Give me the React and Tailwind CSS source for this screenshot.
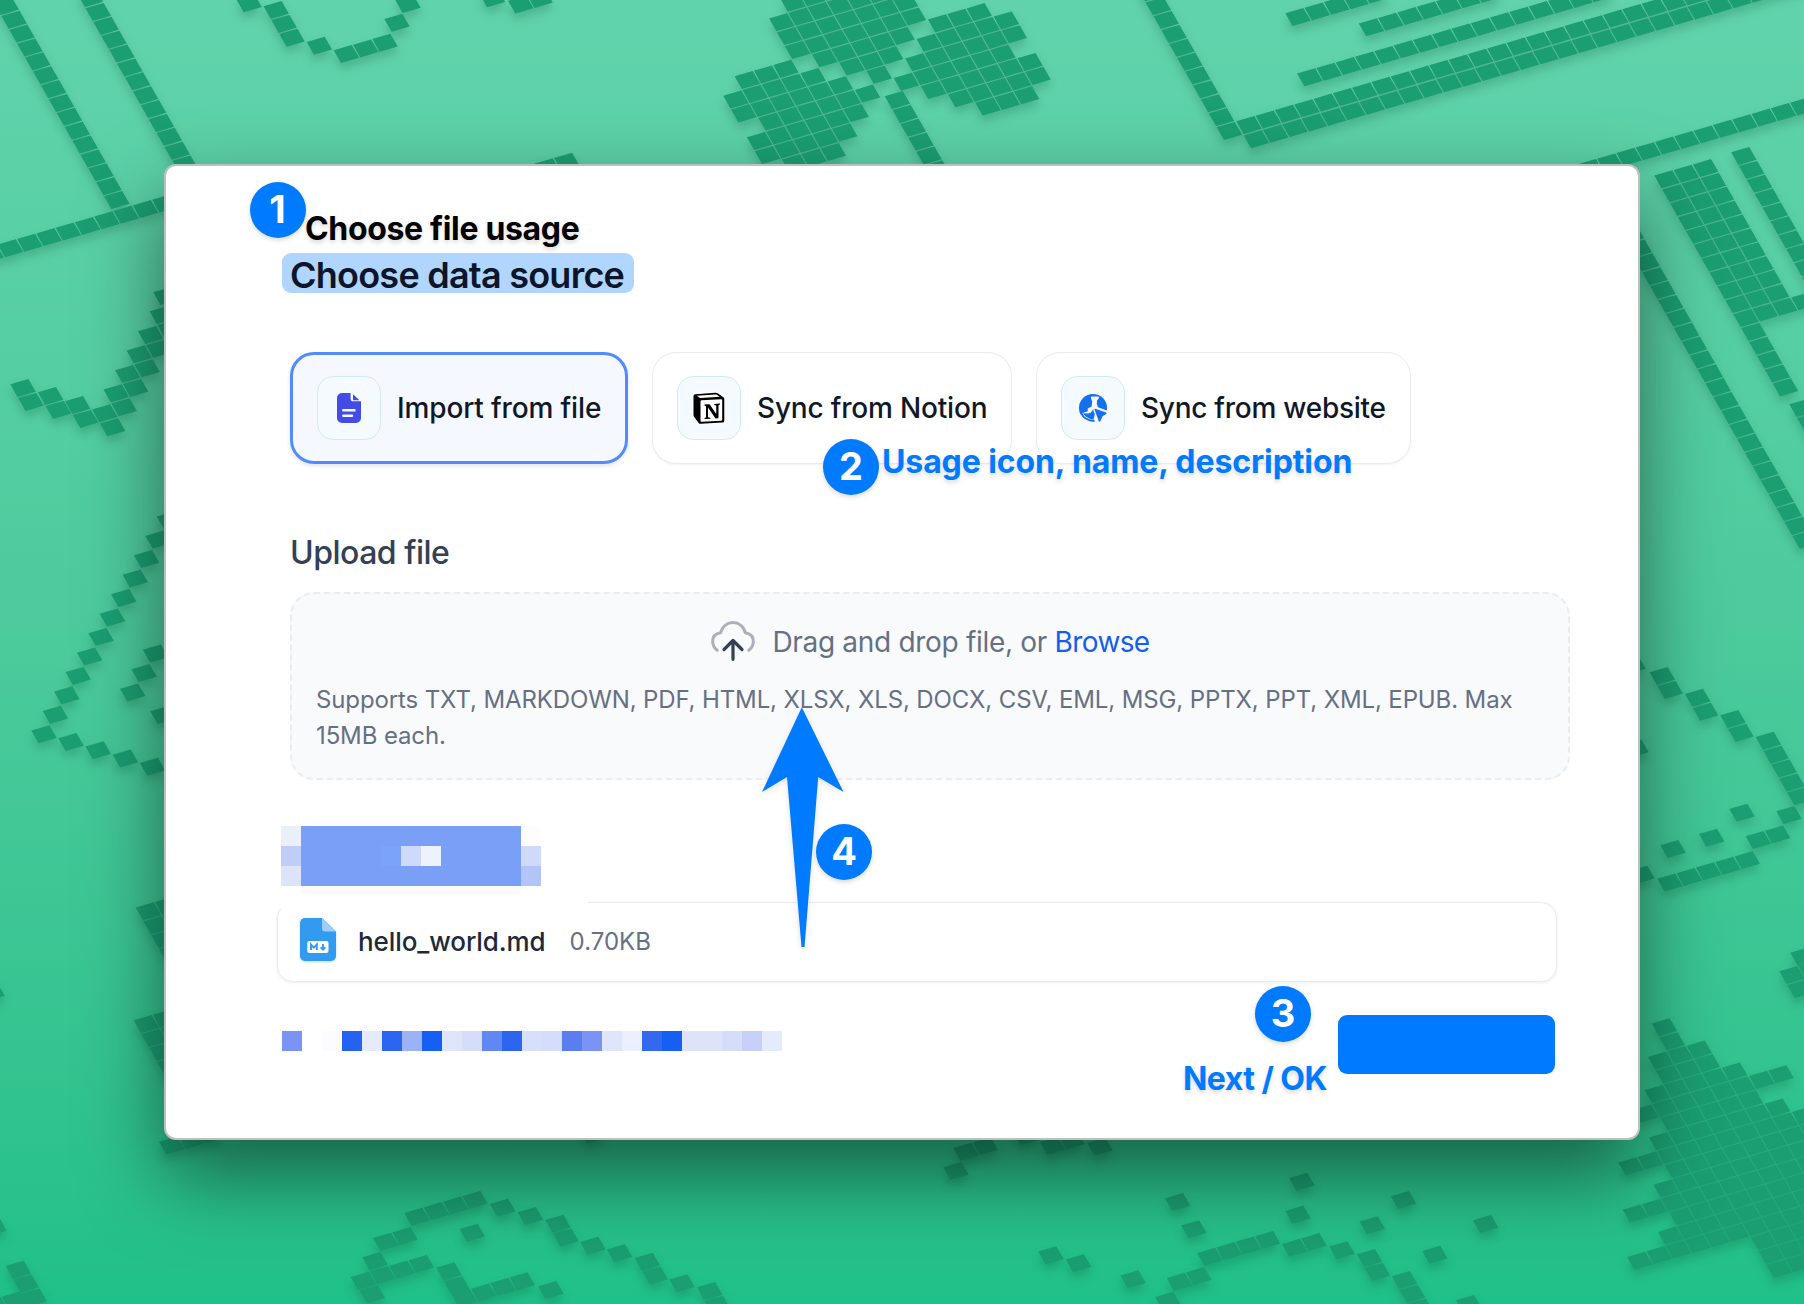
import React from "react";

const U = [19.3, -5.6];
const V = [7.9, 13.87];

// [x, y, columns, rows] of a block; x and y are the centre of its first tile
const BLOCKS = [
  [-1.7, -8, 1, 16], [90.3, -1.9, 1, 13], [-8.9, 253.9, 10, 1],
  [249.1, 3.3, 1, 1], [276.2, 10, 1, 3], [319.3, 45.7, 1, 1], [346.4, 54, 3, 1], [397, 22.7, 1, 1], [408, 4, 1, 1],
  [492.5, -1.7, 1, 1], [520.7, 4.5, 2, 1], [547.4, 167.3, 2, 1],
  [897.4, 100, 1, 6],
  [1150.4, -7.7, 1, 11], [1249, 125, 26, 1], [1256.4, 139.3, 29, 1],
  [1309.8, 77.3, 16, 1], [1371.5, 27.3, 7, 1], [1298, 17, 5, 1],
  [1590.5, 168, 13, 1], [1667, 179.3, 3, 10], [1746, 318, 5, 1], [1746, 318, 1, 6], [1623.4, 220.7, 1, 24],
  [1743.8, 156, 1, 10], [1802, 408, 1, 4],
  [23, 388, 1, 2], [50.6, 396, 1, 2], [77.7, 405, 1, 2], [104.7, 413.3, 1, 2], [116.2, 393.3, 1, 2], [127.7, 374, 1, 2],
  [139.2, 354.3, 1, 2], [150.7, 335, 1, 2], [162.3, 315, 1, 2], [166, 296, 1, 1],
  [163, 715, 1, 1], [148.3, 911.3, 2, 5], [146.3, 1024, 2, 5], [171.7, 1145.5, 3, 1],
  [-6, 1227, 1, 1], [-8, 992, 1, 1], [18.3, 1269.7, 1, 3], [-5, 1306, 2, 1],
  [1633, 665, 1, 1], [1662.3, 676, 1, 2], [1697.7, 697.8, 1, 2], [1733, 719, 1, 2], [1768.3, 740.8, 1, 5], [1636, 748.5, 1, 1],
  [1789, 815, 1, 1], [1742, 812.7, 1, 1], [1711.7, 837.8, 1, 1], [1673, 849, 1, 1], [1758.3, 840, 2, 1], [1642, 874.8, 1, 1],
  [1670, 882.5, 5, 1], [1803, 956.5, 1, 1], [1792, 975, 2, 1], [1800, 989, 1, 1],
  [592, 1134, 1, 1], [966, 1151.7, 2, 1], [956, 1171, 1, 1], [1026, 1136, 1, 1], [1052.7, 1146, 2, 1], [1100, 1146.7, 1, 1],
  [417, 1216.7, 4, 1], [385.7, 1241.7, 2, 1], [472.3, 1232.7, 1, 1], [502.7, 1207.7, 1, 1], [530.4, 1216, 1, 1],
  [558, 1223.7, 1, 2], [592.9, 1245.7, 1, 1], [619.6, 1253.3, 1, 1], [647.3, 1261.7, 1, 2], [682, 1283.3, 1, 1], [709.8, 1291, 1, 2],
  [375, 1261, 1, 1], [363.4, 1280.7, 4, 1], [372.3, 1294.3, 1, 1], [449, 1271.3, 1, 2], [464.3, 1298, 4, 1], [550.9, 1290, 1, 1],
  [1177.7, 1202, 1, 1], [1301.8, 1181.7, 1, 1], [1403.6, 1200, 1, 1], [1193.8, 1229.3, 1, 1], [1298, 1214.7, 1, 1],
  [1372.3, 1225.3, 1, 1], [1485.7, 1224, 1, 1], [1050.9, 1255.3, 1, 1], [1078.6, 1263.3, 1, 1], [1133, 1279.3, 1, 1],
  [1209.8, 1256.7, 4, 1], [1294.6, 1247.7, 2, 1], [1342, 1250.3, 1, 1], [1369.6, 1258, 1, 2], [1434.8, 1254.7, 1, 1],
  [1404.5, 1280, 1, 3], [1179.5, 1281.7, 2, 1], [1167.9, 1300.7, 1, 1], [1468.8, 1304, 1, 1],
];

// clusters: origin plus [row, firstColumn, lastColumn]
const CLUSTERS = [
  { at: [747.3, 80], rows: [[0, 0, 2], [1, -1, 3], [2, -1, 4], [3, 0, 5], [4, -1, 4], [5, -1, 3], [6, 0, 2]] },
  { at: [797.6, 50], rows: [[-4, 2, 6], [-3, 1, 6], [-2, 0, 6], [-1, 0, 6], [0, 0, 6], [1, 1, 5], [2, 2, 4], [3, 3, 3]] },
  { at: [940.6, 23.3], rows: [[0, 0, 2], [1, -1, 3], [2, -2, 3], [3, -3, 2], [4, -2, 3], [5, -1, 3], [6, 0, 2]] },
  {
    at: [1664.3, 1027.3],
    rows: [
      [0, 0, 0], [1, 0, 0], [2, -1, 1], [3, -1, 1], [4, -2, 2], [5, -3, 4], [6, -2, 2], [7, -3, 3], [8, -5, 4], [9, -3, 4],
      [10, -4, 4], [11, -6, 4], [12, -4, 4], [13, -5, 4], [14, -7, 3], [15, -1, 3], [16, -1, 2], [17, -1, 2],
    ],
  },
];

// slanted runs: [x, y, du, dv, count]
const DIAGONALS = [
  [44, 734.3, 1, -1, 12],
  [71, 742, 1, 1, 5],
  [132.7, 692.4, 1, -1, 3],
];

function tile(x, y) {
  const a = 0.47;
  const b = 0.46;
  const p = (s, t) => `${(x + s * a * U[0] + t * b * V[0]).toFixed(1)} ${(y + s * a * U[1] + t * b * V[1]).toFixed(1)}`;
  return `M${p(-1, -1)}L${p(1, -1)}L${p(1, 1)}L${p(-1, 1)}Z`;
}

function wallpaperPath() {
  const out = [];
  const put = (x, y, i, j) => out.push(tile(x + i * U[0] + j * V[0], y + i * U[1] + j * V[1]));
  BLOCKS.forEach(([x, y, c, r]) => {
    for (let i = 0; i < c; i++) for (let j = 0; j < r; j++) put(x, y, i, j);
  });
  CLUSTERS.forEach(({ at, rows }) =>
    rows.forEach(([j, from, to]) => {
      for (let i = from; i <= to; i++) put(at[0], at[1], i, j);
    })
  );
  DIAGONALS.forEach(([x, y, du, dv, n]) => {
    for (let k = 0; k < n; k++) put(x, y, du * k, dv * k);
  });
  return out.join("");
}

function Wallpaper() {
  return (
    <svg className="absolute inset-0 h-full w-full" viewBox="0 0 1804 1304" aria-hidden="true">
      <path d={wallpaperPath()} fill="#1b9e72" className="drop-shadow-[0_6px_5px_rgba(0,70,40,0.22)]" />
    </svg>
  );
}

function Badge({ n, className }) {
  return (
    <span
      className={`absolute flex h-14 w-14 items-center justify-center rounded-full bg-[#007aff] pb-0.5 text-[38px] leading-none font-bold text-white shadow-[0_2px_5px_rgba(0,0,0,0.16)] ${className}`}
    >
      {n}
    </span>
  );
}

function Note({ children, className }) {
  return (
    <span className={`absolute text-[32px] leading-10 font-bold whitespace-nowrap [text-shadow:0_3px_4px_rgba(0,0,0,0.14)] ${className}`}>
      {children}
    </span>
  );
}

const FileIcon = () => (
  <svg viewBox="0 0 24 30" className="h-[30px] w-6" fill="#444ce7">
    <path
      fillRule="evenodd"
      d="M5 0h8.6v5.4c0 2 .9 2.900 2.900 2.900H24V25a5 5 0 0 1-5 5H5a5 5 0 0 1-5-5V5a5 5 0 0 1 5-5ZM6.300 16a1.200 1.200 0 0 0 0 2.500h11.200a1.200 1.200 0 0 0 0-2.500H6.300Zm0 5.500a1.200 1.200 0 0 0 0 2.500h8.700a1.200 1.200 0 0 0 0-2.500H6.300Z"
    />
    <path d="M16 1.200v5.200c0 .5.300.9.900.9h5.500Z" />
  </svg>
);

const NotionIcon = () => (
  <svg viewBox="0 0 32 32" className="h-8 w-8">
    <path d="M1.500 2.200 22.500.5 31.500 6.500V28.500L30 31.200 8 32 1 24Z" fill="#fff" stroke="#fff" strokeWidth="3" strokeLinejoin="round" />
    <path d="M2.600 2.200 22 .7c1.300-.1 2 .1 3 .8l5 3.600c1 .7 1.300 1 1.300 2v21.400c0 1.300-.5 2-2 2.100L8.200 31.800c-1.200.1-1.800-.1-2.500-.9L1.500 25.500C.8 24.600.5 24 .5 23.100V4.200c0-1.100.6-1.900 2.100-2Z" fill="#000" />
    <path d="M3.700 3.800 22.300 2.400c.7 0 1 0 1.500.4l2.900 2-18.900 1.200c-.6 0-1-.1-1.400-.5L3.700 3.800Z" fill="#fff" />
    <path d="M8.400 8.300 28.200 7.200c.7 0 1 .3 1 .9v19.500c0 .7-.3 1.100-1 1.100L8.600 29.800c-.7 0-1.100-.3-1.100-1V9.400c0-.7.3-1.100.9-1.100Z" fill="#fff" />
    <path d="M11.500 12.600 16.600 12.200 23.200 21.900V13.400L21.200 12.900V12L27 11.600V12.500L25.500 13.200V26.200L22.500 26.600 15 15.400V25.300L17.300 25.800V26.700L11.500 27V26.100L13 25.500V14.200L11.500 13.600Z" fill="#000" />
  </svg>
);

const WebIcon = () => (
  <svg viewBox="0 0 28 28" className="h-7 w-7">
    <circle cx="14" cy="14" r="14" fill="#1570ef" />
    <path
      fill="#f5faff"
      d="M11.800 3.500 12.500 2.500H19.500L20 4 18 6.500 17.800 10 19 12.600 28 16.500V28H14L15.800 20 14.500 17 14.300 15 12 18.400 9.300 19.500 4 19.200C6 22.300 9.500 25 15.500 25.800L15 28H0L3 19.200 8.800 17.200 8.700 14.500 12.600 12.500 13.200 7.500Z"
    />
    <path fill="none" stroke="#1570ef" strokeWidth="2" d="M2 18.500C4 23.500 9 26.800 15.500 27" />
    <path fill="#1570ef" d="M28 14.500C28 15 28 15.600 27.800 16.200L19 13.200 18.500 12Z" />
    <path fill="#1570ef" d="M16.200 14.700 27 18.600c.8.300.8 1.100.1 1.500l-3.600 2.200-2.200 4.900c-.3.900-1.300.8-1.500 0L15.500 15.500c-.2-.6.200-1 .7-.8Z" />
  </svg>
);

const CloudIcon = () => (
  <svg viewBox="0 0 44 40" className="relative -top-px left-px mr-[18px] h-10 w-11" fill="none" strokeLinecap="round" strokeLinejoin="round">
    <path
      d="M6.200 29.300C3.200 27 1.700 24 1.700 20.500C1.700 16 4.700 12.600 9.700 11.800C11 5.500 16 1.600 22 1.600S33 5.500 34.300 11.800C39.300 12.600 42.300 16 42.300 20.500C42.300 24 40.800 27 37.800 29.300"
      stroke="#aab0bd"
      strokeWidth="3"
    />
    <path d="M13 28.500 22 19.500l9 9M22 20.500v17.800" stroke="#344054" strokeWidth="3.200" />
  </svg>
);

const MarkdownIcon = () => (
  <svg viewBox="0 0 36 43" className="relative -top-[3px] h-[43px] w-9 drop-shadow-[0_1px_1px_rgba(50,150,230,0.35)]">
    <path d="M5 0h17l14 13.500V38a5 5 0 0 1-5 5H5a5 5 0 0 1-5-5V5a5 5 0 0 1 5-5Z" fill="#339bef" />
    <path d="M22 0 36 13.500H25a3 3 0 0 1-3-3Z" fill="#9fcdf8" />
    <rect x="7.300" y="23" width="21.200" height="12" rx="2" fill="#fff" />
    <path d="M11 32v-5.500l2.900 3.200 2.900-3.200V32M23 26v5.200M20.600 29.300l2.400 2.400 2.400-2.400" fill="none" stroke="#339bef" strokeWidth="1.900" />
  </svg>
);

function Source({ icon, label, selected, className }) {
  return (
    <div
      className={`flex h-28 shrink-0 items-center gap-4 rounded-3xl px-6 ${
        selected
          ? "border-[3px] border-[#528bff] bg-[#f5f8ff] shadow-[0_2px_4px_rgba(16,24,40,0.12)]"
          : "border border-[#eaecf0] bg-white shadow-[0_1px_2px_rgba(16,24,40,0.05)]"
      } ${className}`}
    >
      <div className="flex h-16 w-16 shrink-0 items-center justify-center rounded-2xl border border-[#d1e9ff] bg-[#f5faff]">{icon}</div>
      <span className="text-[28px] leading-10 font-medium whitespace-nowrap text-[#101828]">{label}</span>
    </div>
  );
}

const STRIP = [
  "#7b93f4", "#ffffff", "#fcfcfe", "#2363f0", "#e5ebfe", "#2b65f0", "#9bb1f8", "#155ff4", "#dfe5fb", "#d5ddfb", "#6088f4", "#2c66f0", "#d7dffb",
  "#d4ddfb", "#5a7df0", "#7b93f4", "#dfe5fb", "#eceffd", "#3468ef", "#155ff4", "#dfe3fa", "#dee3f9", "#d5ddfb", "#c6d0f8", "#e4ebfc",
];

export default function App() {
  return (
    <div className="relative h-[1304px] w-[1804px] overflow-hidden bg-linear-to-b from-[#61d3ac] via-[#4bca9c] to-[#20c089] px-[164px] pt-[164px] font-['Inter',sans-serif]">
      <Wallpaper />
      <main className="relative h-[976px] w-[1476px] rounded-xl border-2 border-[#bfbfbf] bg-white pt-[87px] pl-[124px] shadow-[0_36px_80px_rgba(0,0,0,0.5)]">
        <h1 className="-ml-2 flex h-10 w-[352px] items-center rounded-[9px] bg-[#b0d6ff] pl-2 text-[36px] leading-10 font-semibold tracking-[-0.76px] whitespace-nowrap text-[#0c1529]">
          <span className="relative top-0.5">Choose data source</span>
        </h1>

        <div className="mt-[59px] flex gap-6">
          <Source selected className="w-[338px] tracking-[-0.14px]" icon={<FileIcon />} label="Import from file" />
          <Source className="w-[360px] tracking-[-0.18px]" icon={<NotionIcon />} label="Sync from Notion" />
          <Source className="w-[375px] tracking-[-0.26px]" icon={<WebIcon />} label="Sync from website" />
        </div>

        <h2 className="mt-[69px] text-[32px] leading-10 font-medium tracking-[-0.5px] whitespace-nowrap text-[#344054]">Upload file</h2>

        <div className="mt-[19px] h-[188px] w-[1280px] rounded-3xl border-2 border-dashed border-[#eaecf0] bg-[#f9fafc] px-6 pt-7">
          <div className="flex items-center justify-center text-[28px] leading-10 whitespace-nowrap text-[#667085]">
            <CloudIcon />
            <span className="tracking-[-0.31px]">Drag and drop file, or&nbsp;</span>
            <span className="tracking-[-0.6px] text-[#155eef]">Browse</span>
          </div>
          <p className="mt-5 text-[24px] leading-9 tracking-[-0.12px] text-[#667085]">
            <span className="block whitespace-nowrap">Supports TXT, MARKDOWN, PDF, HTML, XLSX, XLS, DOCX, CSV, EML, MSG, PPTX, PPT, XML, EPUB. Max</span>
            <span className="block">15MB each.</span>
          </p>
        </div>

        <div className="mt-[46px] -ml-[9px] flex h-[60px]">
          <div className="grid w-5 grid-rows-3">
            <i className="bg-[#ebeffa]" />
            <i className="bg-[#bfcdf8]" />
            <i className="bg-[#dde4f9]" />
          </div>
          <div className="flex w-[220px] items-center bg-[#7a9ff7] pl-20 shadow-[0_8px_0_#fafafa]">
            <i className="h-5 w-5 bg-[#7ba3fa]" />
            <i className="h-5 w-5 bg-[#cfd9fa]" />
            <i className="h-5 w-5 bg-[#eef1fe]" />
          </div>
          <div className="grid w-5 grid-rows-3">
            <i className="bg-[#fdfdfe]" />
            <i className="bg-[#cfd9f9]" />
            <i className="bg-[#b1c5f9]" />
          </div>
        </div>

        <div className="relative mt-4 -ml-[13px] flex h-20 w-[1280px] items-center rounded-2xl border border-[#eaecf0] bg-white pl-[22px] shadow-[0_1px_3px_rgba(16,24,40,0.08)]">
          <div className="absolute -top-1 -left-1 h-[10px] w-[314px] bg-white" />
          <MarkdownIcon />
          <span className="ml-[22px] text-[26px] leading-9 font-medium tracking-[-0.08px] text-[#1d2939]">hello_world.md</span>
          <span className="ml-6 text-[24px] leading-9 text-[#667085]">0.70KB</span>
        </div>

        <div className="mt-[33px] -ml-2 flex w-[1273px] items-start justify-between">
          <div className="mt-4 flex h-5">
            {STRIP.map((c, i) => (
              <i key={i} className="w-5" style={{ backgroundColor: c }} />
            ))}
          </div>
          <button className="h-[59px] w-[217px] rounded-[9px] bg-[#007aff]" aria-label="Next" />
        </div>

        <svg className="absolute top-[541px] left-[596px] h-[242px] w-[82px] drop-shadow-[0_2px_3px_rgba(0,0,0,0.12)]" viewBox="762 707 82 242">
          <path d="M801.800 707.300 843.500 792 818.200 777 804.500 947H801.500L787 777 762 792Z" fill="#007aff" />
        </svg>

        <Badge n="1" className="top-4 left-[83.5px]" />
        <Note className="top-[43px] left-[139px] tracking-[-0.33px] text-black">Choose file usage</Note>
        <Badge n="2" className="top-[273px] left-[657px]" />
        <Note className="top-[276px] left-[716px] tracking-[-0.1px] text-[#007aff]">Usage icon, name, description</Note>
        <Badge n="3" className="top-[820px] left-[1089px]" />
        <Note className="top-[893px] left-[1017px] tracking-[-0.55px] text-[#007aff]">Next / OK</Note>
        <Badge n="4" className="top-[658px] left-[650px]" />
      </main>
    </div>
  );
}
